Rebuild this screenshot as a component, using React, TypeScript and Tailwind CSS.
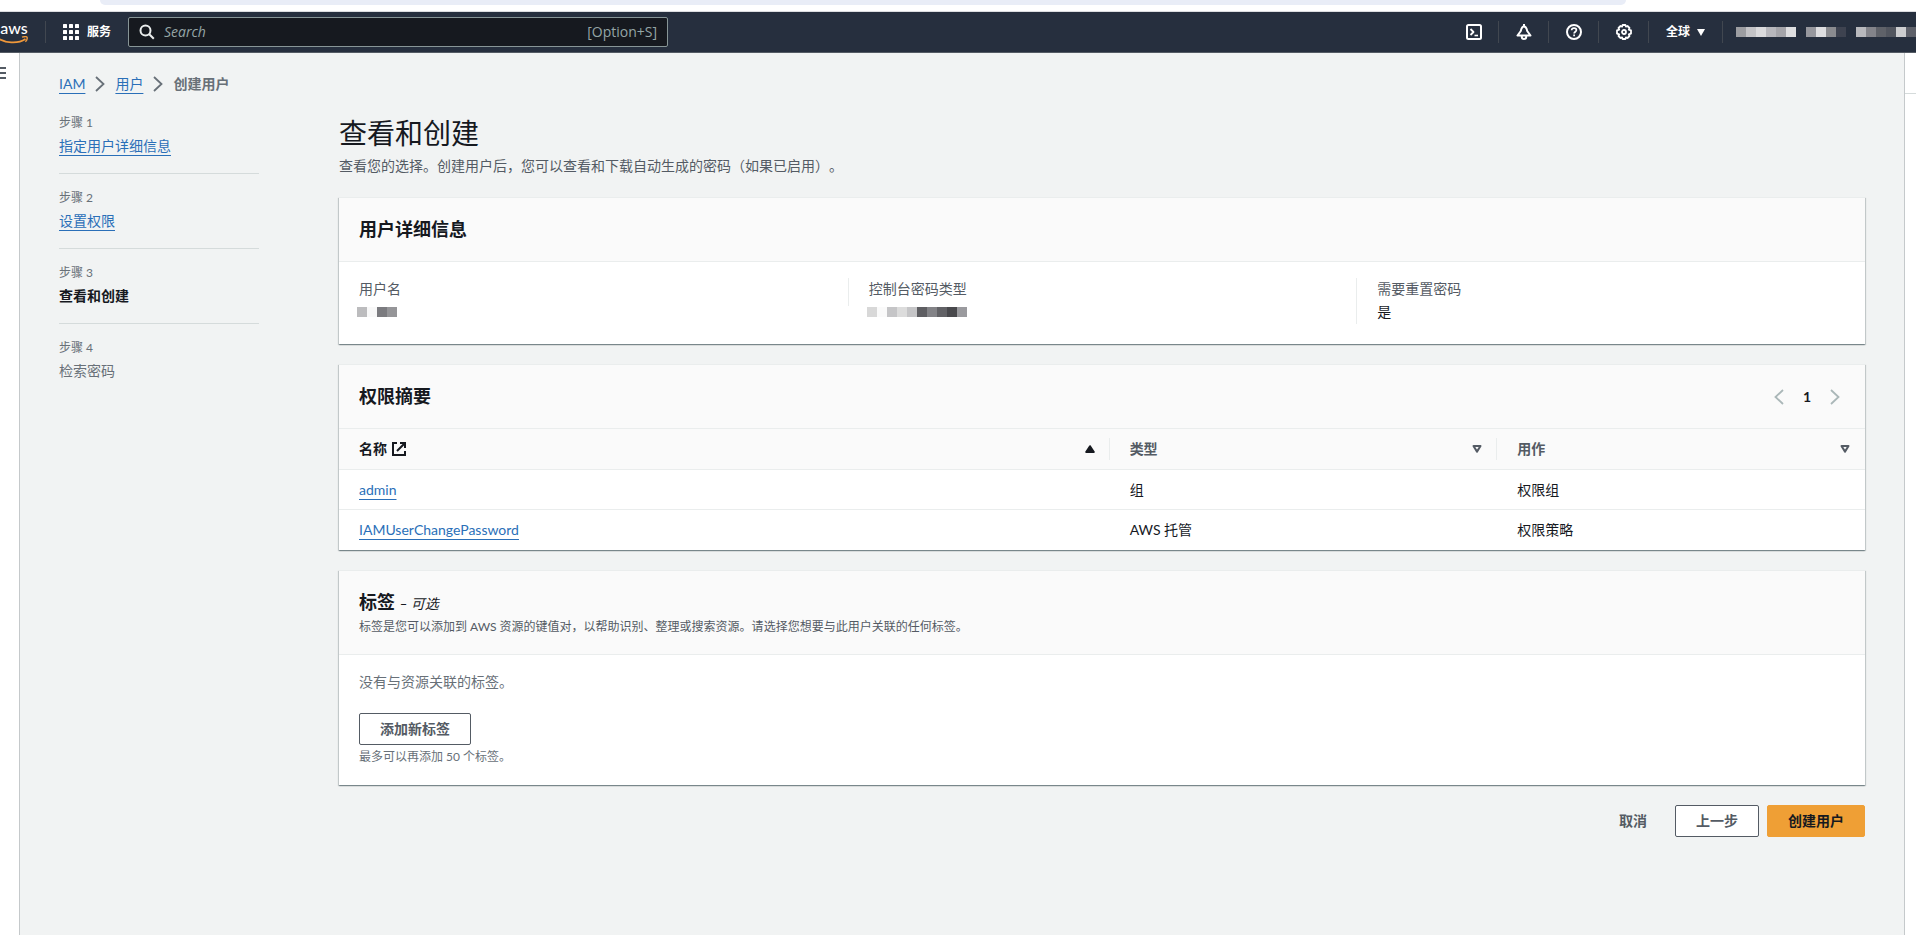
import React from "react";

const steps = [
    { label: "步骤 1", title: "指定用户详细信息", state: "done" },
    { label: "步骤 2", title: "设置权限", state: "done" },
    { label: "步骤 3", title: "查看和创建", state: "current" },
    { label: "步骤 4", title: "检索密码", state: "todo" },
];

const policies = [
    { name: "admin", type: "组", usedAs: "权限组" },
    { name: "IAMUserChangePassword", type: "AWS 托管", usedAs: "权限策略" },
];

const accountBlocks = [
    "#9c9da1", "#c3c3c6", "#dadadc", "#b7b7bc", "#a4a4a9", "#dedee0", "#262f3e",
    "#96979d", "#dedee0", "#8a8b8f", "#3e4350", "#262f3e",
    "#b8b9bd", "#83848a", "#5f6269", "#52565f", "#cdced0", "#5e616a",
];
const userNameBlocks = ["#bcbcbe", "#f8f8f8", "#7b7b7f", "#959598"];
const passwordBlocks = [
    "#d8d8d8", "#fafafa", "#c5c5c7", "#dcdcdc", "#c5c5c7", "#5e5e62", "#838387", "#626266", "#48484c", "#9a9a9e",
];

// Hidden value, shown as a row of grey blocks
const Redacted = ({ blocks }: { blocks: string[] }) => (
    <span className="flex">
        {blocks.map((color, i) => (
            <span key={i} className="h-[10px] w-[10px] shrink-0" style={{ backgroundColor: color }}></span>
        ))}
    </span>
);

const Card = ({ children }: { children: React.ReactNode }) => (
    <section className="border-t border-[#eaeded] bg-white shadow-[0_1px_1px_0_rgba(0,28,36,0.3),1px_1px_1px_0_rgba(0,28,36,0.15),-1px_1px_1px_0_rgba(0,28,36,0.15)]">
        {children}
    </section>
);

const Chevron = ({ left = false }: { left?: boolean }) => (
    <svg width="16" height="16" viewBox="0 0 16 16" fill="none" stroke="currentColor" strokeWidth="1.8" aria-hidden="true">
        {left ? <path d="M12 1L4.500 8l7.500 7" /> : <path d="M4 1l7.500 7L4 15" />}
    </svg>
);

const SortIcon = ({ active = false }: { active?: boolean }) => (
    <svg width="10" height="8" viewBox="0 0 10 8" strokeWidth="2" strokeLinejoin="round" stroke="currentColor" aria-hidden="true">
        {active ? <path d="M5 1.2L8.8 7H1.2z" fill="currentColor" /> : <path d="M1.5 1h7L5 6.6z" fill="none" />}
    </svg>
);

const NavIcon = ({ label, children }: { label: string; children: React.ReactNode }) => (
    <button aria-label={label} className="flex h-[22px] w-[50px] items-center justify-center border-r border-[#414750] pl-0.5">
        <svg width="16" height="16" viewBox="0 0 16 16" fill="none" stroke="currentColor" strokeWidth="2" strokeLinejoin="round">
            {children}
        </svg>
    </button>
);

const TopNav = () => (
    <header className="flex h-[41px] items-center border-b border-[#545b64] bg-[#262f3e] text-white">
        <a href="#" aria-label="AWS" className="flex h-10 w-7 shrink-0 flex-col items-center justify-center">
            <span className="font-[Lato,sans-serif] text-base leading-4 font-medium">aws</span>
            <svg width="28" height="8" viewBox="0 0 28 8" fill="none" stroke="#f0983a" strokeWidth="1.8" className="shrink-0">
                <path d="M-4 1C5 7.500 18 8 25.500 3" />
                <path d="M22 1.200c2-.6 4.500-.7 5 0 .4.8-.4 3.200-1.600 4.600" strokeWidth="1.400" />
            </svg>
        </a>
        <div className="ml-[17px] h-[22px] w-px bg-[#414750]"></div>
        <button className="ml-[17px] flex items-center gap-2 text-xs font-bold">
            <svg width="16" height="16" viewBox="0 0 16 16" fill="currentColor" aria-hidden="true">
                {[0, 6, 12].map((y) => [0, 6, 12].map((x) => <rect key={`${x}-${y}`} x={x} y={y} width="4" height="4" rx="0.6" />))}
            </svg>
            服务
        </button>
        <label className="ml-[17px] flex h-[30px] w-[540px] items-center rounded-xs border border-[#879596] bg-[#16191f] px-[10px] font-['Open_Sans',sans-serif] text-sm text-[#95a5a6]">
            <svg width="16" height="16" viewBox="0 0 16 16" fill="none" stroke="#eaeded" strokeWidth="2" aria-hidden="true">
                <circle cx="6.500" cy="6.500" r="5" />
                <path d="M10 10l4.800 4.800" />
            </svg>
            <input type="text" aria-label="Search" placeholder="Search" className="ml-[9px] min-w-0 flex-1 bg-transparent outline-none placeholder:text-[#95a5a6] placeholder:italic" />
            <span>[Option+S]</span>
        </label>
        <div className="ml-auto flex shrink-0 items-center">
            <NavIcon label="CloudShell">
                <rect x="1" y="1" width="14" height="14" rx="1.500" />
                <path d="M4.500 5l3 3-3 3" strokeWidth="1.800" />
                <path d="M8.500 11.500h3.500" strokeWidth="1.600" />
            </NavIcon>
            <NavIcon label="Notifications">
                <path d="M8 0v2.500M8 2.500C6 2.500 5.300 4.500 4.800 7L1.500 11.500h13L11.200 7C10.700 4.500 10 2.500 8 2.500z" />
                <path d="M5.800 12v1c0 1.200 1 2 2.200 2s2.200-.8 2.200-2v-1" />
            </NavIcon>
            <NavIcon label="Help">
                <circle cx="8" cy="8" r="7" />
                <path d="M5.600 6.300C5.700 4.900 6.600 4.100 8 4.100s2.400.8 2.400 2c0 1.600-2.300 1.700-2.300 3.500" strokeWidth="1.700" />
                <path d="M8.100 10.600v1.700" strokeWidth="1.700" />
            </NavIcon>
            <NavIcon label="Settings">
                <path d="M6.600 1h2.800l.5 1.600 1.600-.6 2 2-.7 1.600 2.200.8v3.200l-2.200.8.7 1.600-2 2-1.600-.6L9.400 15H6.600l-.5-1.600-1.600.6-2-2 .7-1.600L1 9.600V6.400l2.200-.8L2.500 4l2-2 1.600.6z" strokeWidth="1.800" />
                <circle cx="8" cy="8" r="2" strokeWidth="1.800" />
            </NavIcon>
            <button className="flex h-[22px] items-center gap-[7px] border-r border-[#414750] px-[17px] text-xs font-bold">
                全球
                <svg width="8" height="7" viewBox="0 0 8 7" fill="currentColor" aria-hidden="true">
                    <path d="M0 0h8L4 7z" />
                </svg>
            </button>
            <div className="pl-[13px]">
                <Redacted blocks={accountBlocks} />
            </div>
        </div>
    </header>
);

const linkClass = "text-[#2a6fb8] underline underline-offset-4";

const App = () => {
    return (
        <div className="flex min-h-screen flex-col bg-white font-[Lato,'Noto_Sans_CJK_SC',sans-serif] text-sm leading-[22px] text-[#16191f] [text-spacing-trim:space-all]">
            {/* Browser strip */}
            <div className="h-3 border-b border-[#dcdde0]">
                <div className="mr-[290px] ml-[100px] h-[5px] rounded-b-lg bg-[#e9edf7]"></div>
            </div>
            <TopNav />

            <div className="flex flex-1">
                <div className="w-5 shrink-0 border-r border-[#c5c9cb] pt-3.5">
                    <button aria-label="Menu" className="block">
                        <svg width="6" height="12" viewBox="0 0 6 12" stroke="#545b64" strokeWidth="2" aria-hidden="true">
                            <path d="M0 1h6M0 6h6M0 11h6" />
                        </svg>
                    </button>
                </div>

                <main className="min-w-0 flex-1 bg-[#f1f3f3] px-[39px] pt-5 pb-8">
                    <nav aria-label="Breadcrumb" className="flex items-center gap-[7px]">
                        <a href="#" className={linkClass}>IAM</a>
                        <span className="text-[#687078]"><Chevron /></span>
                        <a href="#" className={linkClass}>用户</a>
                        <span className="text-[#687078]"><Chevron /></span>
                        <span className="font-bold text-[#687078]">创建用户</span>
                    </nav>

                    <div className="flex gap-20 pt-1">
                        {/* Wizard steps */}
                        <ol className="w-[200px] shrink-0 divide-y divide-[#d5dbdb]">
                            {steps.map((step) => (
                                <li key={step.label} className="py-4">
                                    <p className="text-xs leading-4 text-[#687078]">{step.label}</p>
                                    <p className="mt-1">
                                        {step.state === "done" && <a href="#" className={linkClass}>{step.title}</a>}
                                        {step.state === "current" && <span className="font-bold">{step.title}</span>}
                                        {step.state === "todo" && <span className="text-[#687078]">{step.title}</span>}
                                    </p>
                                </li>
                            ))}
                        </ol>

                        <div className="flex min-w-0 flex-1 flex-col gap-5 pt-4">
                            <div>
                                <h1 className="text-[28px] leading-9">查看和创建</h1>
                                <p className="mt-1 text-[#545b64]">查看您的选择。创建用户后，您可以查看和下载自动生成的密码（如果已启用）。</p>
                            </div>

                            {/* User details */}
                            <Card>
                                <div className="border-b border-[#eaeded] bg-[#fafafa] px-5 py-5">
                                    <h2 className="text-lg leading-[23px] font-bold">用户详细信息</h2>
                                </div>
                                <dl className="grid grid-cols-3 items-start pt-4 pb-5">
                                    <div className="pl-5">
                                        <dt className="text-[#545b64]">用户名</dt>
                                        <dd className="-ml-0.5 flex h-6 items-center"><Redacted blocks={userNameBlocks} /></dd>
                                    </div>
                                    <div className="flex items-start">
                                        <div className="h-7 w-px bg-[#eaeded]"></div>
                                        <div className="pl-5">
                                            <dt className="text-[#545b64]">控制台密码类型</dt>
                                            <dd className="-ml-0.5 flex h-6 items-center"><Redacted blocks={passwordBlocks} /></dd>
                                        </div>
                                    </div>
                                    <div className="border-l border-[#eaeded] pl-5">
                                        <dt className="text-[#545b64]">需要重置密码</dt>
                                        <dd className="leading-6">是</dd>
                                    </div>
                                </dl>
                            </Card>

                            {/* Permissions summary */}
                            <Card>
                                <div className="flex items-center justify-between border-b border-[#eaeded] bg-[#fafafa] px-5 py-5">
                                    <h2 className="text-lg leading-[23px] font-bold">权限摘要</h2>
                                    <div className="flex items-center gap-4 pr-0.5">
                                        <button aria-label="上一页" className="text-[#aab7b8]"><Chevron left /></button>
                                        <span className="font-bold">1</span>
                                        <button aria-label="下一页" className="text-[#aab7b8]"><Chevron /></button>
                                    </div>
                                </div>
                                <div className="pb-px">
                                    <table className="w-full table-fixed border-collapse text-left">
                                        <thead>
                                            <tr className="h-10 border-b border-[#eaeded] bg-[#fafafa]">
                                                <th className="w-[50.5%] p-0 font-bold">
                                                    <div className="flex h-[22px] items-center border-r border-[#eaeded] pr-3.5 pl-5">
                                                        名称
                                                        <svg width="14" height="14" viewBox="0 0 14 14" fill="none" stroke="currentColor" strokeWidth="2" className="ml-[5px]" aria-hidden="true">
                                                            <path d="M5 1H1v12h12V9" />
                                                            <path d="M8 1h5v5M13 1L5 9" />
                                                        </svg>
                                                        <button aria-label="名称" className="ml-auto"><SortIcon active /></button>
                                                    </div>
                                                </th>
                                                <th className="w-[25.4%] p-0 font-bold text-[#545b64]">
                                                    <div className="flex h-[22px] items-center justify-between border-r border-[#eaeded] pr-3.5 pl-5">
                                                        类型
                                                        <button aria-label="类型"><SortIcon /></button>
                                                    </div>
                                                </th>
                                                <th className="p-0 font-bold text-[#545b64]">
                                                    <div className="flex h-[22px] items-center justify-between pr-[15px] pl-5">
                                                        用作
                                                        <button aria-label="用作"><SortIcon /></button>
                                                    </div>
                                                </th>
                                            </tr>
                                        </thead>
                                        <tbody className="divide-y divide-[#eaeded]">
                                            {policies.map((policy) => (
                                                <tr key={policy.name} className="h-10">
                                                    <td className="px-5 pt-0.5 pb-0"><a href="#" className={linkClass}>{policy.name}</a></td>
                                                    <td className="px-5 pt-0.5 pb-0">{policy.type}</td>
                                                    <td className="px-5 pt-0.5 pb-0">{policy.usedAs}</td>
                                                </tr>
                                            ))}
                                        </tbody>
                                    </table>
                                </div>
                            </Card>

                            {/* Tags */}
                            <Card>
                                <div className="border-b border-[#eaeded] bg-[#fafafa] px-5 pt-5 pb-[19px]">
                                    <h2 className="text-lg leading-[22px] font-bold">
                                        标签 <span className="text-sm font-normal italic">– 可选</span>
                                    </h2>
                                    <p className="mt-1 text-xs leading-[17px] text-[#545b64]">
                                        标签是您可以添加到 AWS 资源的键值对，以帮助识别、整理或搜索资源。请选择您想要与此用户关联的任何标签。
                                    </p>
                                </div>
                                <div className="px-5 pt-4 pb-5">
                                    <p className="text-[#687078]">没有与资源关联的标签。</p>
                                    <button className="mt-5 block h-8 rounded-xs border border-[#545b64] bg-white px-5 font-bold text-[#545b64]">添加新标签</button>
                                    <p className="mt-1 text-xs leading-4 text-[#687078]">最多可以再添加 50 个标签。</p>
                                </div>
                            </Card>

                            <div className="flex justify-end gap-2 font-bold">
                                <button className="h-8 px-5 text-[#545b64]">取消</button>
                                <button className="h-8 rounded-xs border border-[#545b64] bg-white px-5 text-[#545b64]">上一步</button>
                                <button className="h-8 rounded-xs border border-[#ef9f35] bg-[#ef9f35] px-5">创建用户</button>
                            </div>
                        </div>
                    </div>
                </main>

                <aside className="w-3 shrink-0 border-l border-[#c5c9cb]">
                    <div className="h-[41px] border-b border-[#d5dbdb]"></div>
                </aside>
            </div>
        </div>
    );
};

export default App;
